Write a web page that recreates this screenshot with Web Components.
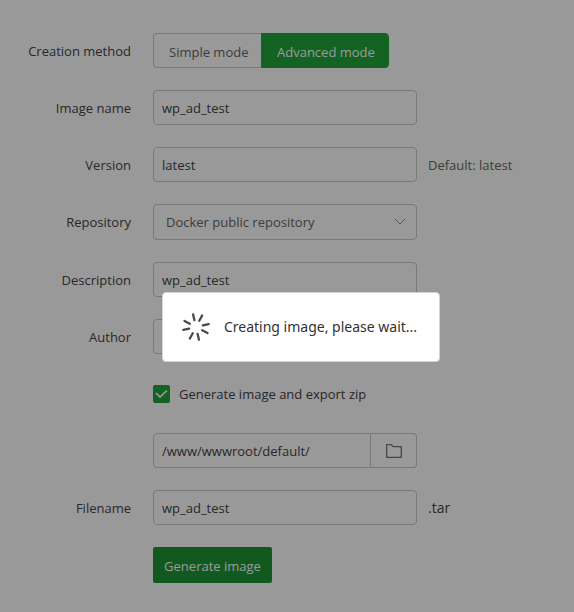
<!DOCTYPE html>
<html lang="en">
<head>
<meta charset="utf-8">
<title>Create image</title>
<style>
body{margin:0;background:#fff;color:#444;font:13px/20px "Open Sans","Noto Sans",sans-serif;
--line:#c8c8c8;--green:#20a53a;--green-dark:#1d9434;--ink:#444;--muted:#666}
</style>
</head>
<body>
<image-form></image-form>
<loading-mask>Creating image, please wait...</loading-mask>
<script>
const base = `
*{box-sizing:border-box}
:host{display:block}
button,input,select{font:inherit;color:inherit;margin:0}
.row{display:flex;align-items:center}
.label{width:131px;flex:none;text-align:right;margin-right:22px}
.control{width:264px;height:35px;border:1px solid var(--line);border-radius:4px;background:#fff;outline:0}
input.control{padding:0 8px;color:var(--ink)}
svg{display:block;fill:none;stroke:currentColor}
`;
function define(name, css, html) {
  customElements.define(name, class extends HTMLElement {
    constructor() {
      super();
      this.attachShadow({mode: 'open'}).innerHTML = `<style>${base}${css}</style>${html(this)}`;
    }
  });
}
const attr = (el, name) => el.getAttribute(name) || '';

define('text-field', `.hint{margin-left:11px;white-space:nowrap;color:var(--muted)}`, el => `
<div class="row"><label class="label" for="f">${attr(el, 'label')}</label>
<input class="control" id="f" type="text" value="${attr(el, 'value')}"><span class="hint"><slot></slot></span></div>`);

define('mode-switch', `
.group{display:flex}
button{height:35px;padding:2px 15px 0;border:1px solid var(--line);background:#fff;color:var(--muted);border-radius:4px 0 0 4px;border-right:0;width:108px;white-space:nowrap}
button.on{width:128px;border:1px solid var(--green);background:var(--green);color:#fff;border-radius:0 4px 4px 0}`, el => `
<div class="row"><span class="label" id="l">${attr(el, 'label')}</span>
<div class="group" role="group" aria-labelledby="l"><button type="button" aria-pressed="false">Simple mode</button><button type="button" class="on" aria-pressed="true">Advanced mode</button></div></div>`);

define('select-field', `
.wrap{display:grid;align-items:center}
.wrap>*{grid-area:1/1}
select{appearance:none;height:36px!important;padding:0 36px 0 12px;color:var(--muted)!important}
svg{justify-self:end;margin-right:11px;color:#999;pointer-events:none}`, el => `
<div class="row"><label class="label" for="f">${attr(el, 'label')}</label>
<div class="wrap"><select class="control" id="f"><option>${attr(el, 'value')}</option></select>
<svg width="12" height="8" viewBox="0 0 12 8"><path d="M1 1l5 5 5-5"/></svg></div></div>`);

define('check-field', `
.row{height:35px}
label.text{padding-left:9px}
.wrap{display:grid;place-items:center}
.wrap>*{grid-area:1/1}
input{appearance:none;width:17px;height:18px;border:1px solid var(--green);border-radius:2px}
input:checked{background:var(--green)}
svg{color:#fff;pointer-events:none}`, () => `
<div class="row"><span class="label"></span><span class="wrap"><input type="checkbox" id="f" checked>
<svg width="13" height="10" viewBox="0 0 13 10" stroke-width="1.7"><path d="M1 4l4 4 7-6.5"/></svg></span>
<label class="text" for="f"><slot></slot></label></div>`);

define('path-field', `
.group{width:264px;display:flex}
input.control{flex:1;min-width:0;width:auto;border-radius:4px 0 0 4px}
button{width:46px;border:1px solid var(--line);border-left:0;border-radius:0 4px 4px 0;background:#fff;padding:0;display:grid;place-items:center;color:#777}`, el => `
<div class="row"><span class="label"></span><div class="group">
<input class="control" type="text" aria-label="Export path" value="${attr(el, 'value')}">
<button type="button" aria-label="Choose folder"><svg width="16" height="14" viewBox="0 0 16 14" stroke-width="1.3"><path d="M.7.7h4.6l2 2h8v10.6H.7z"/></svg></button></div></div>`);

define('submit-button', `
button{height:36px;width:119px;padding:2px 0 0;border:0;border-radius:2px;background:var(--green-dark);color:#fff;white-space:nowrap}`, () => `
<div class="row"><span class="label"></span><button type="submit"><slot></slot></button></div>`);

define('image-form', `
form{display:flex;flex-direction:column;gap:22px;padding:33px 0 29px}
.ext{font-size:14px;color:var(--ink)}`, () => `
<form>
<mode-switch label="Creation method"></mode-switch>
<text-field label="Image name" value="wp_ad_test"></text-field>
<text-field label="Version" value="latest">Default: latest</text-field>
<select-field label="Repository" value="Docker public repository"></select-field>
<text-field label="Description" value="wp_ad_test"></text-field>
<text-field label="Author"></text-field>
<check-field>Generate image and export zip</check-field>
<path-field value="/www/wwwroot/default/"></path-field>
<text-field label="Filename" value="wp_ad_test"><span class="ext">.tar</span></text-field>
<submit-button>Generate image</submit-button>
</form>`);

define('loading-mask', `
:host{position:fixed;inset:0;display:flex;align-items:center;justify-content:center;padding:42px 0 0 28px;background:rgba(0,0,0,.4)}
.box{display:flex;align-items:center;gap:13px;height:70px;padding:0 22px 0 18px;background:#fff;border:1px solid #d3d3d3;border-radius:4px;font-family:"Noto Sans",sans-serif;font-size:14px;color:#333;white-space:nowrap}
svg{color:#4a4a4a}`, () => `
<div class="box" role="alert" aria-busy="true">
<svg width="30" height="30" viewBox="-15 -15 30 30" stroke-width="2.3" stroke-linecap="round">
<g transform="rotate(-13)">${[0,45,90,135,180,225,270,315].map((a, i) => `<path transform="rotate(${a + (i % 2 ? -4 : 0)})" d="M0-13v6"/>`).join('')}</g></svg>
<span><slot></slot></span></div>`);
</script>
</body>
</html>
